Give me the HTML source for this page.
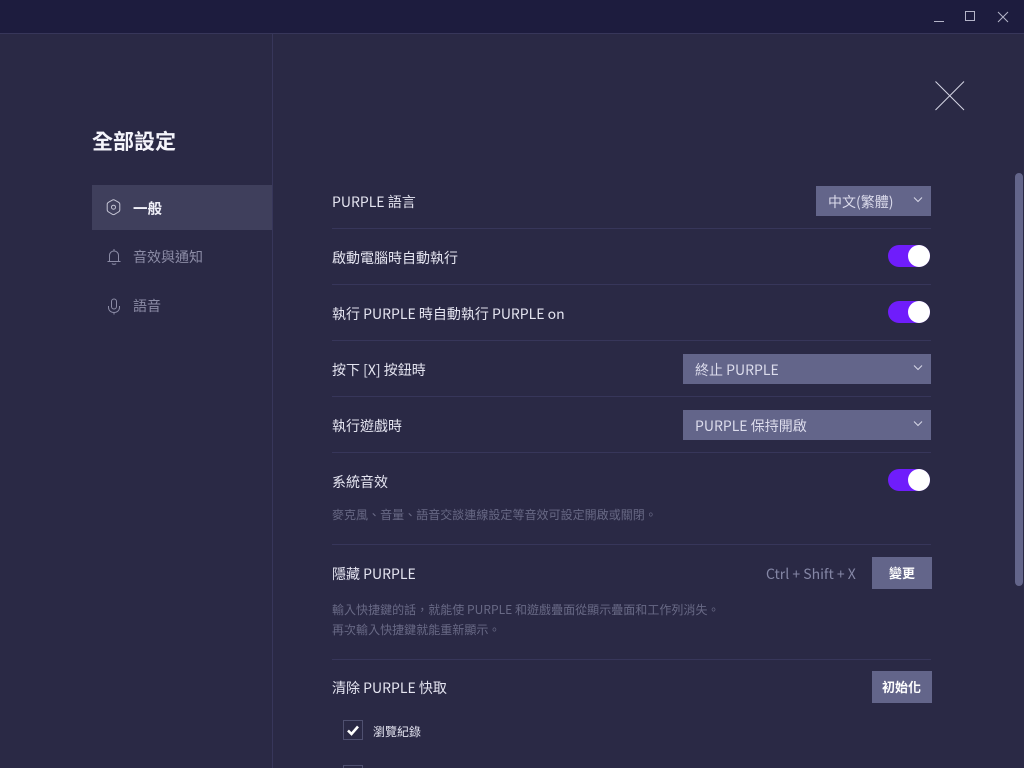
<!DOCTYPE html>
<html lang="zh-Hant"><head><meta charset="utf-8"><title>全部設定</title>
<style>
*{box-sizing:border-box}
html,body{margin:0;padding:0;width:1024px;height:768px;overflow:hidden;background:#2a2945;font-family:"Noto Sans CJK TC","Liberation Sans",sans-serif;color:#e6e6f2}
#w{position:absolute;left:0;top:0;width:1024px;height:768px;overflow:hidden}
.a{position:absolute;white-space:nowrap}
.l{left:332px;font-size:14px;line-height:20px;color:#e4e4f0}
.hr{position:absolute;left:332px;width:599px;height:1px;background:#37365a}
.sel{position:absolute;background:#63658a;height:30px;color:#dcdcec;font-size:14px;line-height:32px;padding-left:12px}
.sel svg{position:absolute;right:8px;top:10px}
.tg{position:absolute;left:888px;width:42px;height:22px;border-radius:11px;background:#6f1dfb}
.tg i{position:absolute;right:0;top:0;width:22px;height:22px;border-radius:50%;background:#fff}
.d{left:332px;font-size:12px;line-height:20px;color:#686985;letter-spacing:.03px}
.btn{position:absolute;left:872px;width:60px;height:32px;background:#63658a;color:#fff;font-size:13px;font-weight:700;line-height:32px;text-align:center}
.cb{position:absolute;left:343px;width:20px;height:20px;border:1px solid #4f5070}
</style></head><body><div id="w">
<div class="a" style="left:0;top:0;width:1024px;height:33px;background:#1d1c3e"></div>
<div class="a" style="left:0;top:33px;width:1024px;height:1px;background:#37365a"></div>
<svg class="a" style="left:930px;top:8px" width="84" height="18" fill="none" stroke="#b4b4c8">
<path d="M4 13.5H14" stroke-width="1"/><rect x="35.5" y="3.5" width="9" height="9" stroke-width="1"/><path d="M68 4L78 14M78 4L68 14" stroke-width="1"/></svg>
<div class="a" style="left:272px;top:34px;width:1px;height:734px;background:#37365a"></div>
<svg class="a" style="left:934px;top:80px" width="32" height="32" fill="none" stroke="#d4d4e4" stroke-width="1"><path d="M1.5 1.5L30 30M30 1.5L1.5 30"/></svg>

<div class="a" style="left:92px;top:126px;font-size:21px;line-height:30px;font-weight:700;color:#f4f4fb">全部設定</div>
<div class="a" style="left:92px;top:185px;width:180px;height:45px;background:#3f3f5c"></div>
<svg class="a" style="left:105px;top:199px" width="17" height="17" fill="none" stroke="#c4c4d4" stroke-width="1"><path d="M7.2 1.2Q8.5 .4 9.8 1.2L13.4 3.2Q14.8 3.9 14.8 5.4V10.8Q14.8 12.3 13.4 13L9.8 15.2Q8.5 16 7.2 15.2L3.6 13Q2.2 12.3 2.2 10.8V5.4Q2.2 3.9 3.6 3.2Z" stroke-linejoin="round"/><circle cx="8.5" cy="8.2" r="2"/></svg>
<div class="a" style="left:133px;top:198px;font-size:14.5px;line-height:21px;font-weight:700;color:#f0f0f8">一般</div>
<svg class="a" style="left:106px;top:248px" width="16" height="18" fill="none" stroke="#8c8ca6" stroke-width="1"><path d="M1.5 13.5H14.5M3.5 13V7.5C3.5 4.8 5.5 3 8 3S12.5 4.8 12.5 7.5V13M8 1V3M6 15.5C6.5 16.5 9.5 16.5 10 15.5"/></svg>
<div class="a" style="left:133px;top:247px;font-size:14px;line-height:21px;color:#8c8ca6">音效與通知</div>
<svg class="a" style="left:106px;top:298px" width="16" height="18" fill="none" stroke="#8c8ca6" stroke-width="1"><rect x="5.5" y="1" width="5" height="10" rx="2.5"/><path d="M2.5 8V9.5C2.5 12.5 5 14.5 8 14.5S13.5 12.5 13.5 9.5V8M8 14.5V16.5"/></svg>
<div class="a" style="left:133px;top:296px;font-size:14px;line-height:21px;color:#8c8ca6">語音</div>

<div class="a l" style="top:192px">PURPLE 語言</div>
<div class="sel a" style="left:816px;top:186px;width:115px">中文(繁體)<svg width="10" height="8" fill="none" stroke="#d8d8e8"><path d="M1 1.5L5 5.5L9 1.5"/></svg></div>
<div class="hr" style="top:228px"></div>
<div class="a l" style="top:248px">啟動電腦時自動執行</div>
<div class="tg" style="top:245px"><i></i></div>
<div class="hr" style="top:284px"></div>
<div class="a l" style="top:304px">執行 PURPLE 時自動執行 PURPLE on</div>
<div class="tg" style="top:301px"><i></i></div>
<div class="hr" style="top:340px"></div>
<div class="a l" style="top:360px">按下 [X] 按鈕時</div>
<div class="sel a" style="left:683px;top:354px;width:248px">終止 PURPLE<svg width="10" height="8" fill="none" stroke="#d8d8e8"><path d="M1 1.5L5 5.5L9 1.5"/></svg></div>
<div class="hr" style="top:396px"></div>
<div class="a l" style="top:416px">執行遊戲時</div>
<div class="sel a" style="left:683px;top:410px;width:248px">PURPLE 保持開啟<svg width="10" height="8" fill="none" stroke="#d8d8e8"><path d="M1 1.5L5 5.5L9 1.5"/></svg></div>
<div class="hr" style="top:452px"></div>
<div class="a l" style="top:472px">系統音效</div>
<div class="tg" style="top:469px"><i></i></div>
<div class="a d" style="top:505px">麥克風、音量、語音交談連線設定等音效可設定開啟或關閉。</div>
<div class="hr" style="top:544px"></div>
<div class="a l" style="top:564px">隱藏 PURPLE</div>
<div class="a" style="left:766px;top:564px;font-size:14px;line-height:20px;color:#8587a6">Ctrl + Shift + X</div>
<div class="btn" style="top:557px">變更</div>
<div class="a d" style="top:600px">輸入快捷鍵的話，就能使 PURPLE 和遊戲疊面從顯示疊面和工作列消失。</div>
<div class="a d" style="top:620px">再次輸入快捷鍵就能重新顯示。</div>
<div class="hr" style="top:659px"></div>
<div class="a l" style="top:678px">清除 PURPLE 快取</div>
<div class="btn" style="top:671px;padding-right:1px">初始化</div>
<div class="cb" style="top:720px"></div>
<svg class="a" style="left:343px;top:720px" width="20" height="20" fill="none" stroke="#fff" stroke-width="2.6"><path d="M5 10.5L8.5 14L15 6.5"/></svg>
<div class="a" style="left:373px;top:722px;font-size:12px;line-height:20px;color:#e4e4f0">瀏覽紀錄</div>
<div class="cb" style="top:765px"></div>
<div class="a" style="left:1015px;top:173px;width:8px;height:413px;border-radius:4px;background:#63658a"></div>
</div></body></html>
